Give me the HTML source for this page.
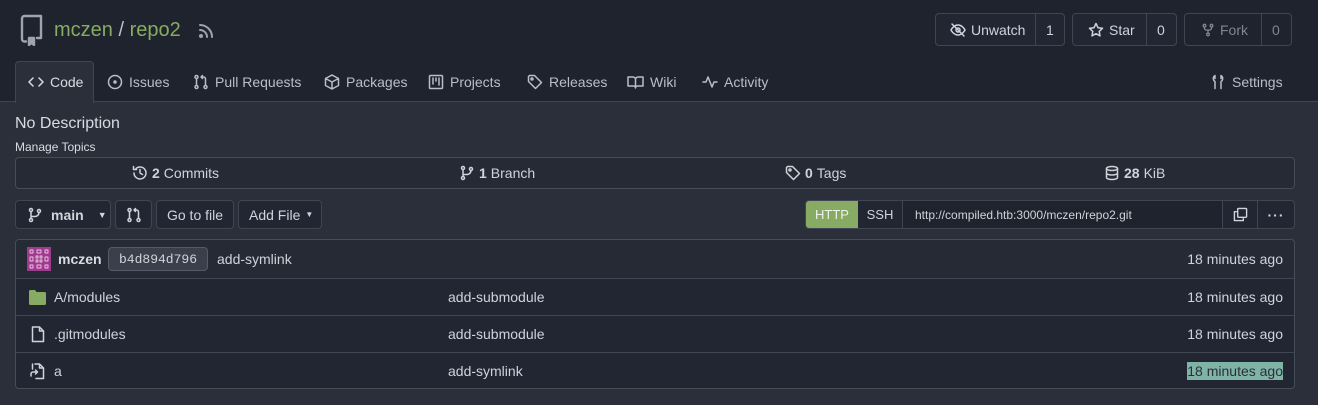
<!DOCTYPE html>
<html><head><style>
*{box-sizing:border-box;margin:0;padding:0}
body{width:1318px;height:405px;background:#2b2f3a;font-family:"Liberation Sans",sans-serif;color:#cfd3da;font-size:14px;overflow:hidden;position:relative}
.hdr{position:absolute;left:0;top:0;width:1318px;height:102px;background:#1f232d;border-bottom:1px solid #404552}
.abs{position:absolute}
svg{fill:none;stroke:currentColor;stroke-width:1.5;stroke-linecap:round;stroke-linejoin:round}
.btn{position:absolute;border:1px solid #404552;border-radius:4px;background:#222632;display:flex;align-items:center;color:#cfd3da;font-size:14px}
.tab{position:absolute;top:74px;display:flex;align-items:center;gap:6px;color:#b9bec8;font-size:14px}
.box{position:absolute;border:1px solid #474c59;border-radius:4px;background:#222632}
.row{position:absolute;left:0;width:100%;height:37px;border-top:1px solid #404552;display:flex;align-items:center}
</style></head><body>
<div class="hdr"></div>
<svg class="abs" style="left:18px;top:14px;color:#9ea3ad;stroke-width:2.4" width="26" height="32" viewBox="0 0 26 32"><path d="M4 25V4.5A2.5 2.5 0 0 1 6.5 2H23v22H19M4 25a2.5 2.5 0 0 0 2.5 2.5H8"/><path d="M11 24v7l2.5-2 2.5 2v-7z" fill="#9ea3ad"/></svg>
<div class="abs" style="left:54px;top:19px;font-size:20px;color:#87ab63">mczen<span style="color:#b9bec8"> / </span>repo2</div>
<svg class="abs" style="left:198px;top:23px;color:#9ea3ad;stroke-width:2" width="16" height="16" viewBox="0 0 16 16"><path d="M2 2a12 12 0 0 1 12 12M2 7a7 7 0 0 1 7 7"/><circle cx="3" cy="13" r="1"/></svg>

<div class="btn" style="left:935px;top:13px;width:130px;height:33px;font-size:14px"><span style="display:flex;align-items:center;gap:5px;padding-left:14px;width:100px;border-right:1px solid #404552;height:100%"><svg width="16" height="16" viewBox="0 0 16 16"><path d="M1 8s2.5-5 7-5 7 5 7 5-2.5 5-7 5-7-5-7-5z"/><circle cx="8" cy="8" r="2"/><path d="M2 2l12 12"/></svg>Unwatch</span><span style="padding-left:10px">1</span></div>
<div class="btn" style="left:1072px;top:13px;width:105px;height:33px"><span style="display:flex;align-items:center;gap:5px;padding-left:15px;width:74px;border-right:1px solid #404552;height:100%"><svg width="16" height="16" viewBox="0 0 16 16"><path d="M8 1.5l2 4.2 4.5.6-3.3 3.1.8 4.5L8 11.7l-4 2.2.8-4.5L1.5 6.3 6 5.7z"/></svg>Star</span><span style="padding-left:10px">0</span></div>
<div class="btn" style="left:1184px;top:13px;width:108px;height:33px;color:#80858f;background:#1f232d"><span style="display:flex;align-items:center;gap:5px;padding-left:16px;width:77px;border-right:1px solid #404552;height:100%"><svg width="14" height="14" viewBox="0 0 16 16"><circle cx="4" cy="3" r="1.5"/><circle cx="12" cy="3" r="1.5"/><circle cx="8" cy="13" r="1.5"/><path d="M4 4.5v1.5a2 2 0 0 0 2 2h4a2 2 0 0 0 2-2V4.5M8 8v3.5"/></svg>Fork</span><span style="padding-left:10px">0</span></div>

<div class="abs" style="left:15px;top:61px;width:79px;height:42px;background:#2b2f3a;border:1px solid #404552;border-bottom:none;border-radius:4px 4px 0 0"></div>
<div class="tab" style="left:28px;color:#d8dce2"><svg width="16" height="16" viewBox="0 0 16 16"><path d="M5 4L1 8l4 4M11 4l4 4-4 4"/></svg>Code</div>
<div class="tab" style="left:107px"><svg width="16" height="16" viewBox="0 0 16 16"><circle cx="8" cy="8" r="6.5"/><circle cx="8" cy="8" r="1" fill="currentColor"/></svg>Issues</div>
<div class="tab" style="left:193px"><svg width="16" height="16" viewBox="0 0 16 16"><circle cx="3.5" cy="3" r="1.5"/><circle cx="3.5" cy="13" r="1.5"/><circle cx="12.5" cy="13" r="1.5"/><path d="M3.5 4.5v7M12.5 11.5V5a2 2 0 0 0-2-2H8M9.5 1.5L8 3l1.5 1.5"/></svg>Pull Requests</div>
<div class="tab" style="left:324px"><svg width="16" height="16" viewBox="0 0 16 16"><path d="M8 1l6.5 3.5v7L8 15l-6.5-3.5v-7zM1.5 4.5L8 8l6.5-3.5M8 8v7"/></svg>Packages</div>
<div class="tab" style="left:428px"><svg width="16" height="16" viewBox="0 0 16 16"><rect x="1.5" y="1.5" width="13" height="13" rx="1"/><path d="M5 4v6M8 4v3M11 4v7"/></svg>Projects</div>
<div class="tab" style="left:527px"><svg width="16" height="16" viewBox="0 0 16 16"><path d="M1.5 2.5v5l7 7 6-6-7-7h-5z"/><circle cx="5" cy="5" r="1"/></svg>Releases</div>
<div class="tab" style="left:627px"><svg width="17" height="16" viewBox="0 0 17 16"><path d="M1 3h5a2.5 2.5 0 0 1 2.5 2.5V14a2 2 0 0 0-2-2H1zM16 3h-5a2.5 2.5 0 0 0-2.5 2.5V14a2 2 0 0 1 2-2H16z"/></svg>Wiki</div>
<div class="tab" style="left:702px"><svg width="16" height="16" viewBox="0 0 16 16"><path d="M1 8h3l2-5 4 10 2-5h3"/></svg>Activity</div>
<div class="tab" style="left:1210px"><svg width="16" height="16" viewBox="0 0 16 16"><path d="M5 1.5a3.5 3.5 0 0 0 0 6v7M11 1.5a3.5 3.5 0 0 1 0 6v7M5 1.5v3M11 1.5v3"/></svg>Settings</div>

<div class="abs" style="left:15px;top:115px;font-size:16px;color:#d8dce2">No Description</div>
<div class="abs" style="left:15px;top:140px;font-size:12px;color:#d8dce2">Manage Topics</div>

<div class="box" style="left:15px;top:157px;width:1280px;height:32px;background:#262a35"></div>
<div class="abs" style="left:132px;top:165px;display:flex;gap:4px;align-items:center"><svg width="16" height="16" viewBox="0 0 16 16"><path d="M2 8a6 6 0 1 0 2-4.5M1.5 1.5v3h3M8 4.5V8l2.5 1.5"/></svg><b>2</b> Commits</div>
<div class="abs" style="left:459px;top:165px;display:flex;gap:4px;align-items:center"><svg width="16" height="16" viewBox="0 0 16 16"><circle cx="4" cy="3" r="1.5"/><circle cx="4" cy="13" r="1.5"/><circle cx="12" cy="4" r="1.5"/><path d="M4 4.5v7M12 5.5a4 4 0 0 1-4 4H4"/></svg><b>1</b> Branch</div>
<div class="abs" style="left:785px;top:165px;display:flex;gap:4px;align-items:center"><svg width="16" height="16" viewBox="0 0 16 16"><path d="M1.5 2.5v5l7 7 6-6-7-7h-5z"/><circle cx="5" cy="5" r="1"/></svg><b>0</b> Tags</div>
<div class="abs" style="left:1104px;top:165px;display:flex;gap:4px;align-items:center"><svg width="16" height="16" viewBox="0 0 16 16"><ellipse cx="8" cy="3.5" rx="5.5" ry="2"/><path d="M2.5 3.5v9c0 1.1 2.5 2 5.5 2s5.5-.9 5.5-2v-9M2.5 8c0 1.1 2.5 2 5.5 2s5.5-.9 5.5-2"/></svg><b>28</b> KiB</div>

<div class="btn" style="left:15px;top:200px;width:96px;height:29px;padding-left:11px;gap:8px"><svg width="16" height="16" viewBox="0 0 16 16"><circle cx="4" cy="3" r="1.5"/><circle cx="4" cy="13" r="1.5"/><circle cx="12" cy="4" r="1.5"/><path d="M4 4.5v7M12 5.5a4 4 0 0 1-4 4H4"/></svg><b>main</b><span style="font-size:9px;margin-left:6px">▼</span></div>
<div class="btn" style="left:115px;top:200px;width:37px;height:29px;justify-content:center"><svg width="16" height="16" viewBox="0 0 16 16"><circle cx="3.5" cy="3" r="1.5"/><circle cx="3.5" cy="13" r="1.5"/><circle cx="12.5" cy="13" r="1.5"/><path d="M3.5 4.5v7M12.5 11.5V5a2 2 0 0 0-2-2H8M9.5 1.5L8 3l1.5 1.5"/></svg></div>
<div class="btn" style="left:156px;top:200px;width:78px;height:29px;justify-content:center">Go to file</div>
<div class="btn" style="left:238px;top:200px;width:84px;height:29px;padding-left:10px">Add File<span style="font-size:8px;margin-left:5px">▼</span></div>

<div class="btn" style="left:805px;top:200px;width:490px;height:29px;overflow:hidden">
<span style="background:#87ab63;color:#eef2ea;width:52px;height:100%;display:flex;align-items:center;justify-content:center;font-size:13px">HTTP</span>
<span style="width:45px;height:100%;display:flex;align-items:center;justify-content:center;font-size:13px;border-right:1px solid #404552">SSH</span>
<span style="width:320px;height:100%;display:flex;align-items:center;padding-left:12px;font-size:12px;background:#1f232d;border-right:1px solid #404552">http://compiled.htb:3000/mczen/repo2.git</span>
<span style="width:35px;height:100%;display:flex;align-items:center;justify-content:center;border-right:1px solid #404552"><svg width="15" height="15" viewBox="0 0 16 16"><rect x="5" y="1.5" width="9.5" height="9.5" rx="1"/><path d="M3.5 5H1.5v9.5H11v-2"/></svg></span>
<span style="flex:1;text-align:center;font-weight:bold;letter-spacing:1px">···</span>
</div>

<div class="box" style="left:15px;top:239px;width:1280px;height:150px;overflow:hidden">
<div class="row" style="top:0;border-top:none;background:#262a35;height:38px">
<svg class="abs" style="left:11px;top:7px" width="24" height="24" viewBox="0 0 24 24"><rect width="24" height="24" fill="#a03a8e" stroke="none"/><path d="M3 3h3v3H3zM10 3h4v3h-4zM18 3h3v3h-3zM3 10h3v4H3zM18 10h3v4h-3zM3 18h3v3H3zM10 18h4v3h-4zM18 18h3v3h-3zM9 9h2v2H9zM13 13h2v2h-2zM13 9h2v2h-2zM9 13h2v2H9z" stroke="#e8c9e2" stroke-width=".9"/></svg>
<b class="abs" style="left:42px;top:11px;color:#d8dce2">mczen</b>
<span class="abs" style="left:92px;top:7px;width:100px;height:24px;background:#3a3f4b;border:1px solid #555a66;border-radius:4px;font-family:'Liberation Mono',monospace;font-size:13px;display:flex;align-items:center;justify-content:center">b4d894d796</span>
<span class="abs" style="left:201px;top:11px">add-symlink</span>
<span class="abs" style="right:11px;top:11px">18 minutes ago</span>
</div>
<div class="row" style="top:38px">
<svg class="abs" style="left:13px;top:11px" width="17" height="15" viewBox="0 0 17 15"><path d="M0 1.5A1.5 1.5 0 0 1 1.5 0h4.5l1.5 2h8a1.5 1.5 0 0 1 1.5 1.5v10a1.5 1.5 0 0 1-1.5 1.5h-14A1.5 1.5 0 0 1 0 13.5z" fill="#87ab63" stroke="none"/></svg>
<span class="abs" style="left:38px;top:10px">A/modules</span><span class="abs" style="left:432px;top:10px">add-submodule</span><span class="abs" style="right:11px;top:10px">18 minutes ago</span></div>
<div class="row" style="top:75px">
<svg class="abs" style="left:14px;top:10px" width="16" height="17" viewBox="0 0 16 17"><path d="M2.5 1h7l4 4v10.5h-11z M9.5 1v4h4"/></svg>
<span class="abs" style="left:38px;top:10px">.gitmodules</span><span class="abs" style="left:432px;top:10px">add-submodule</span><span class="abs" style="right:11px;top:10px">18 minutes ago</span></div>
<div class="row" style="top:112px">
<svg class="abs" style="left:14px;top:10px" width="16" height="17" viewBox="0 0 16 17"><path d="M5 1h4.5l4 4v10.5H6 M9.5 1v4h4 M2.5 1v5 M1 13v-2a2 2 0 0 1 2-2h4M5.5 7l2 2-2 2"/></svg>
<span class="abs" style="left:38px;top:10px">a</span><span class="abs" style="left:432px;top:10px">add-symlink</span><span class="abs" style="right:11px;top:9px;background:#7fb3a6;color:#2b2f3a;padding:1px 0">18 minutes ago</span></div>
</div>
</body></html>
